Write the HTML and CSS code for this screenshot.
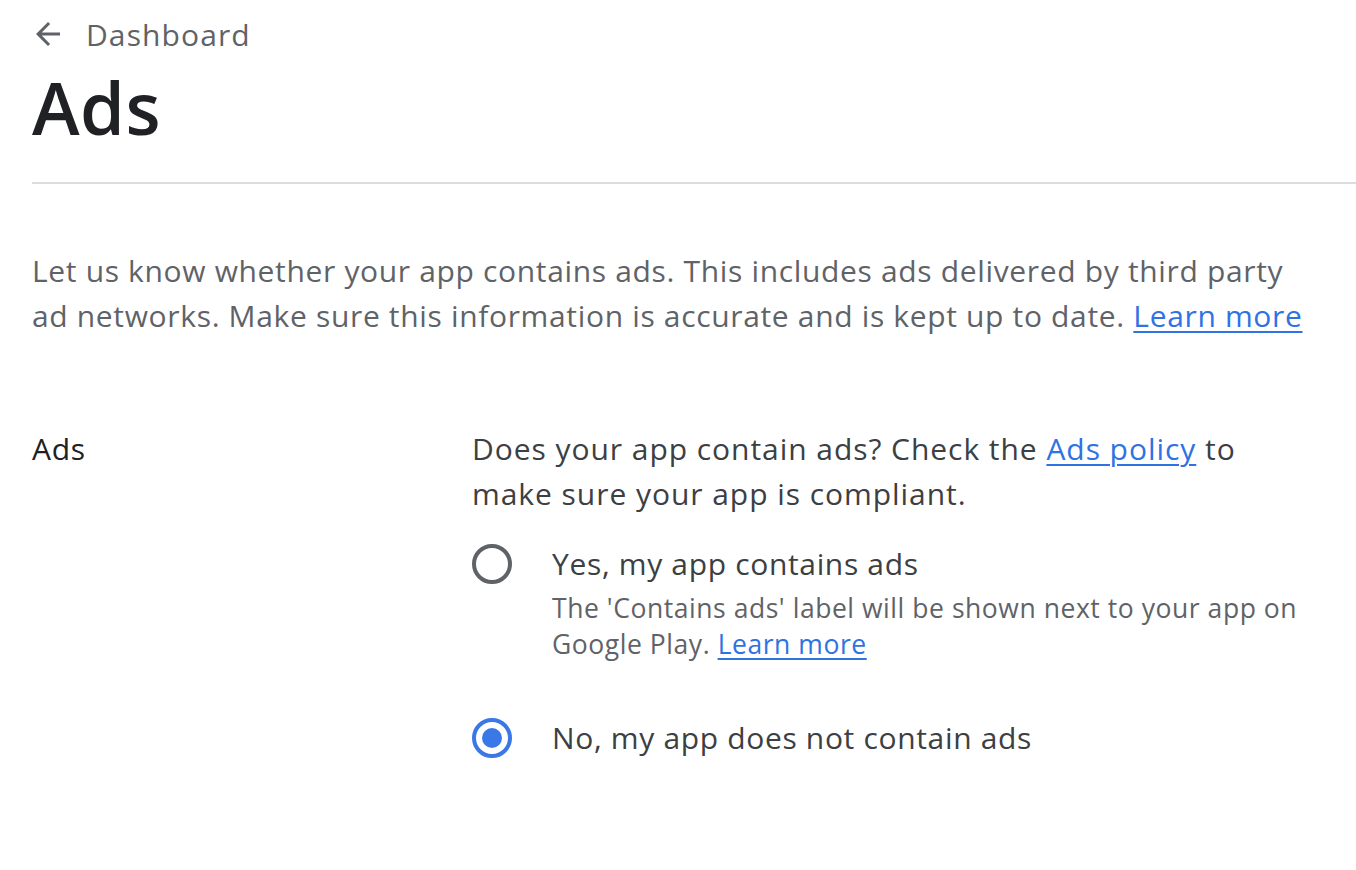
FILE: index.html
```html
<!DOCTYPE html>
<html lang="en">
<head>
<meta charset="utf-8">
<title>Ads</title>
<link rel="stylesheet" href="styles.css">
</head>
<body>
<div class="page">
  <header class="header">
    <a class="back" href="#">
      <svg class="back-icon" viewBox="0 0 24 24" width="36" height="36" aria-hidden="true">
        <path d="M20 11H7.83l5.59-5.59L12 4l-8 8 8 8 1.41-1.41L7.83 13H20v-2z" fill="#5f6368"/>
      </svg>
      <span class="back-label">Dashboard</span>
    </a>
    <h1 class="title">Ads</h1>
  </header>
  <div class="divider"></div>
  <p class="intro">Let us know whether your app contains ads. This includes ads delivered by third party ad networks. Make sure this information is accurate and is kept up to date. <a class="link" href="#">Learn more</a></p>
  <section class="row">
    <div class="row-label">Ads</div>
    <div class="row-body">
      <p class="question">Does your app contain ads? Check the <a class="link" href="#">Ads policy</a> to make sure your app is compliant.</p>
      <div class="options">
        <label class="option">
          <span class="radio"></span>
          <span class="option-text">
            <span class="option-label">Yes, my app contains ads</span>
            <span class="option-desc">The 'Contains ads' label will be shown next to your app on Google Play. <a class="link" href="#">Learn more</a></span>
          </span>
        </label>
        <label class="option">
          <span class="radio checked"></span>
          <span class="option-text">
            <span class="option-label">No, my app does not contain ads</span>
          </span>
        </label>
      </div>
    </div>
  </section>
</div>
</body>
</html>
```

FILE: styles.css
```css
html, body {
  margin: 0;
  padding: 0;
  background: #ffffff;
}
body {
  font-family: "Open Sans", Roboto, "Liberation Sans", sans-serif;
  color: #202124;
  letter-spacing: 0.66px;
}
.page {
  padding: 14px 0 0 32px;
}
.header {
  display: flex;
  flex-direction: column;
}
.back {
  display: flex;
  align-items: center;
  gap: 20px;
  text-decoration: none;
  color: #5f6368;
  height: 40px;
}
.back-icon {
  margin-left: -2px;
}
.back-label {
  font-size: 30px;
  letter-spacing: 1.1px;
}
.title {
  margin: 3px 0 0 0;
  font-size: 72px;
  font-weight: 600;
  line-height: 100px;
  letter-spacing: 0.5px;
  color: #202124;
}
.divider {
  height: 2px;
  background: #dadce0;
  margin-top: 25px;
}
.intro {
  margin: 64px 0 0 0;
  font-size: 30px;
  line-height: 45px;
  color: #5f6368;
  max-width: 1285px;
}
.link {
  color: #2f72e3;
  text-decoration: underline;
  text-underline-offset: 4px;
  text-decoration-thickness: 2px;
}
.row {
  display: grid;
  grid-template-columns: 440px 1fr;
  margin-top: 88px;
}
.row-label {
  font-size: 30px;
  line-height: 45px;
  color: #202124;
}
.row-body {
  display: flex;
  flex-direction: column;
}
.question {
  margin: 0;
  font-size: 30px;
  line-height: 45px;
  letter-spacing: 0.95px;
  color: #3c4043;
  max-width: 800px;
}
.options {
  display: flex;
  flex-direction: column;
  gap: 56px;
  margin-top: 28px;
}
.option {
  display: flex;
  gap: 40px;
  align-items: flex-start;
}
.radio {
  flex: none;
  width: 40px;
  height: 40px;
  box-sizing: border-box;
  border: 4px solid #5f6368;
  border-radius: 50%;
  position: relative;
}
.radio.checked {
  border-color: #3b78e7;
}
.radio.checked::after {
  content: "";
  position: absolute;
  left: 6px;
  top: 6px;
  width: 20px;
  height: 20px;
  border-radius: 50%;
  background: #3b78e7;
}
.option-text {
  display: flex;
  flex-direction: column;
}
.option-label {
  font-size: 30px;
  line-height: 40px;
  color: #3c4043;
}
.option-desc {
  margin-top: 6px;
  font-size: 26.5px;
  line-height: 36px;
  letter-spacing: 0.55px;
  color: #5f6368;
  max-width: 760px;
}
```
